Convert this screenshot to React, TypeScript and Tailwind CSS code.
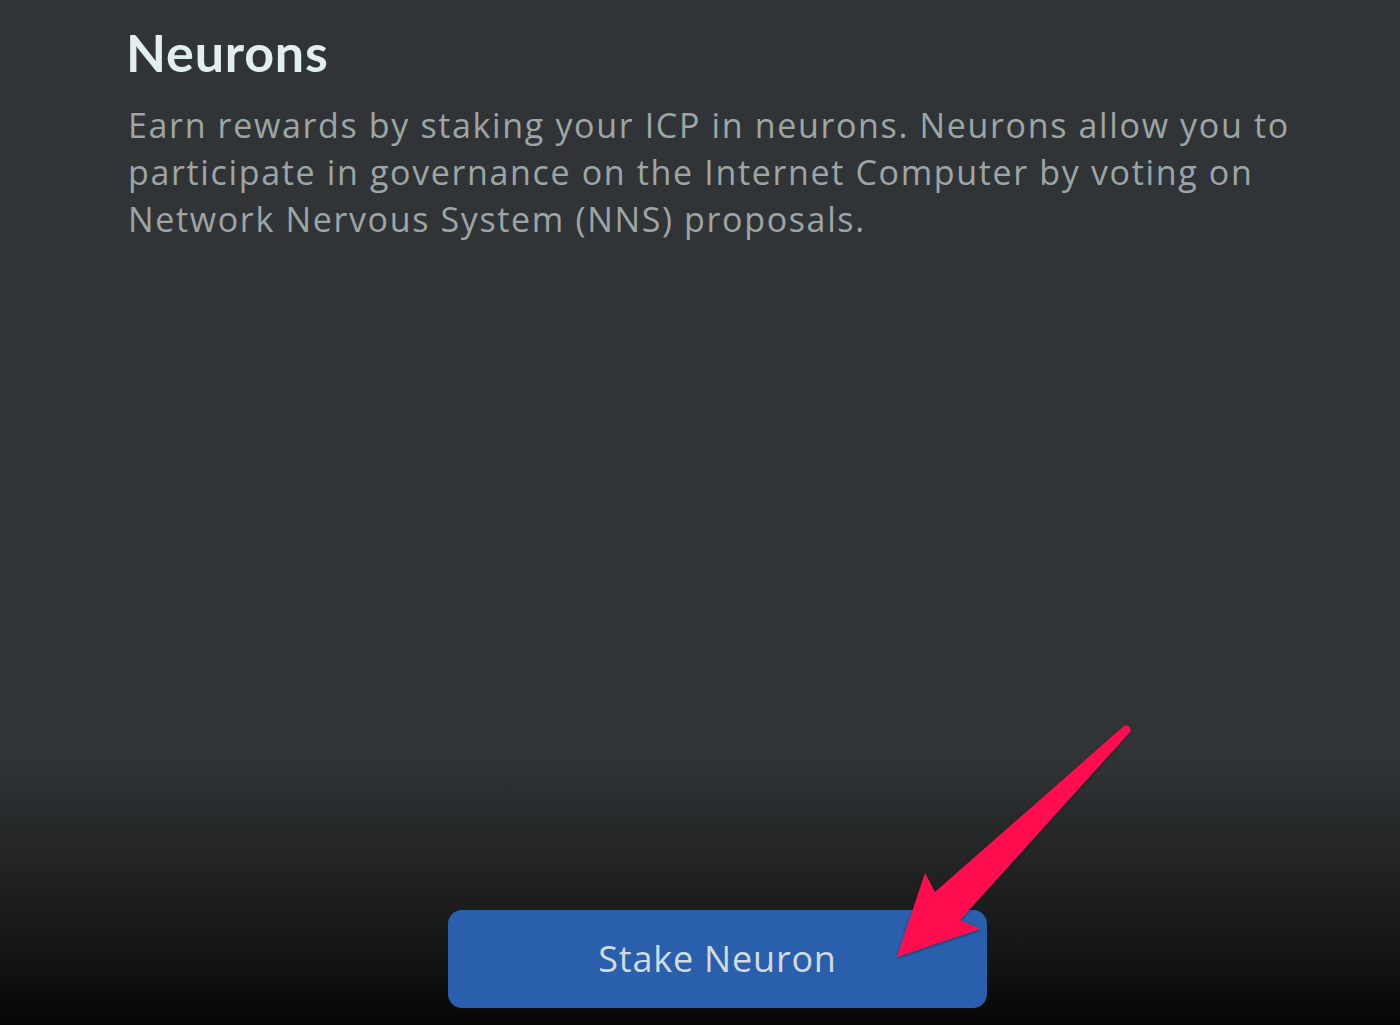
import React from "react";

export default function App() {
  return (
    <div
      className="relative w-[1400px] h-[1025px] overflow-hidden flex flex-col bg-[linear-gradient(to_bottom,#313436_0%,#313436_74%,#272a2b_80%,#1c1e1e_88%,#101111_95%,#050505_100%)]"
      style={{ fontFamily: "'Open Sans', Lato, sans-serif" }}
    >
      <div className="pl-[128px] pt-[26px] pr-[40px]">
        <h1
          className="text-[52px] leading-none font-bold text-[#e3eeee] tracking-[0.8px] -ml-[2px]"
          style={{ fontFamily: "Lato, 'Open Sans', sans-serif" }}
        >
          Neurons
        </h1>
        <p className="mt-[24px] text-[34px] leading-[47px] text-[#9da6a6] tracking-[1.65px] whitespace-nowrap">
          Earn rewards by staking your ICP in neurons. Neurons allow you to
          <br />
          participate in governance on the Internet Computer by voting on
          <br />
          Network Nervous System (NNS) proposals.
        </p>
      </div>
      <div className="flex-1" />
      <div className="pl-[448px] pb-[17px]">
        <button className="w-[539px] h-[98px] rounded-[14px] bg-[#2a5fad] text-[36px] tracking-[0.8px] text-[#d3dbdd] flex items-center justify-center">
          Stake Neuron
        </button>
      </div>
      <svg
        className="absolute inset-0 pointer-events-none"
        width="1400"
        height="1025"
        viewBox="0 0 1400 1025"
      >
        <defs>
          <filter id="sh" x="-20%" y="-20%" width="140%" height="140%">
            <feDropShadow dx="0" dy="1" stdDeviation="1.5" floodColor="#000" floodOpacity="0.45" />
          </filter>
        </defs>
        <path
          d="M897 957 L925 873 L935 892 L1124 726 A4.5 4.5 0 0 1 1130 732 L960 920 L980 929 Z"
          fill="#ff1150"
          filter="url(#sh)"
        />
      </svg>
    </div>
  );
}
